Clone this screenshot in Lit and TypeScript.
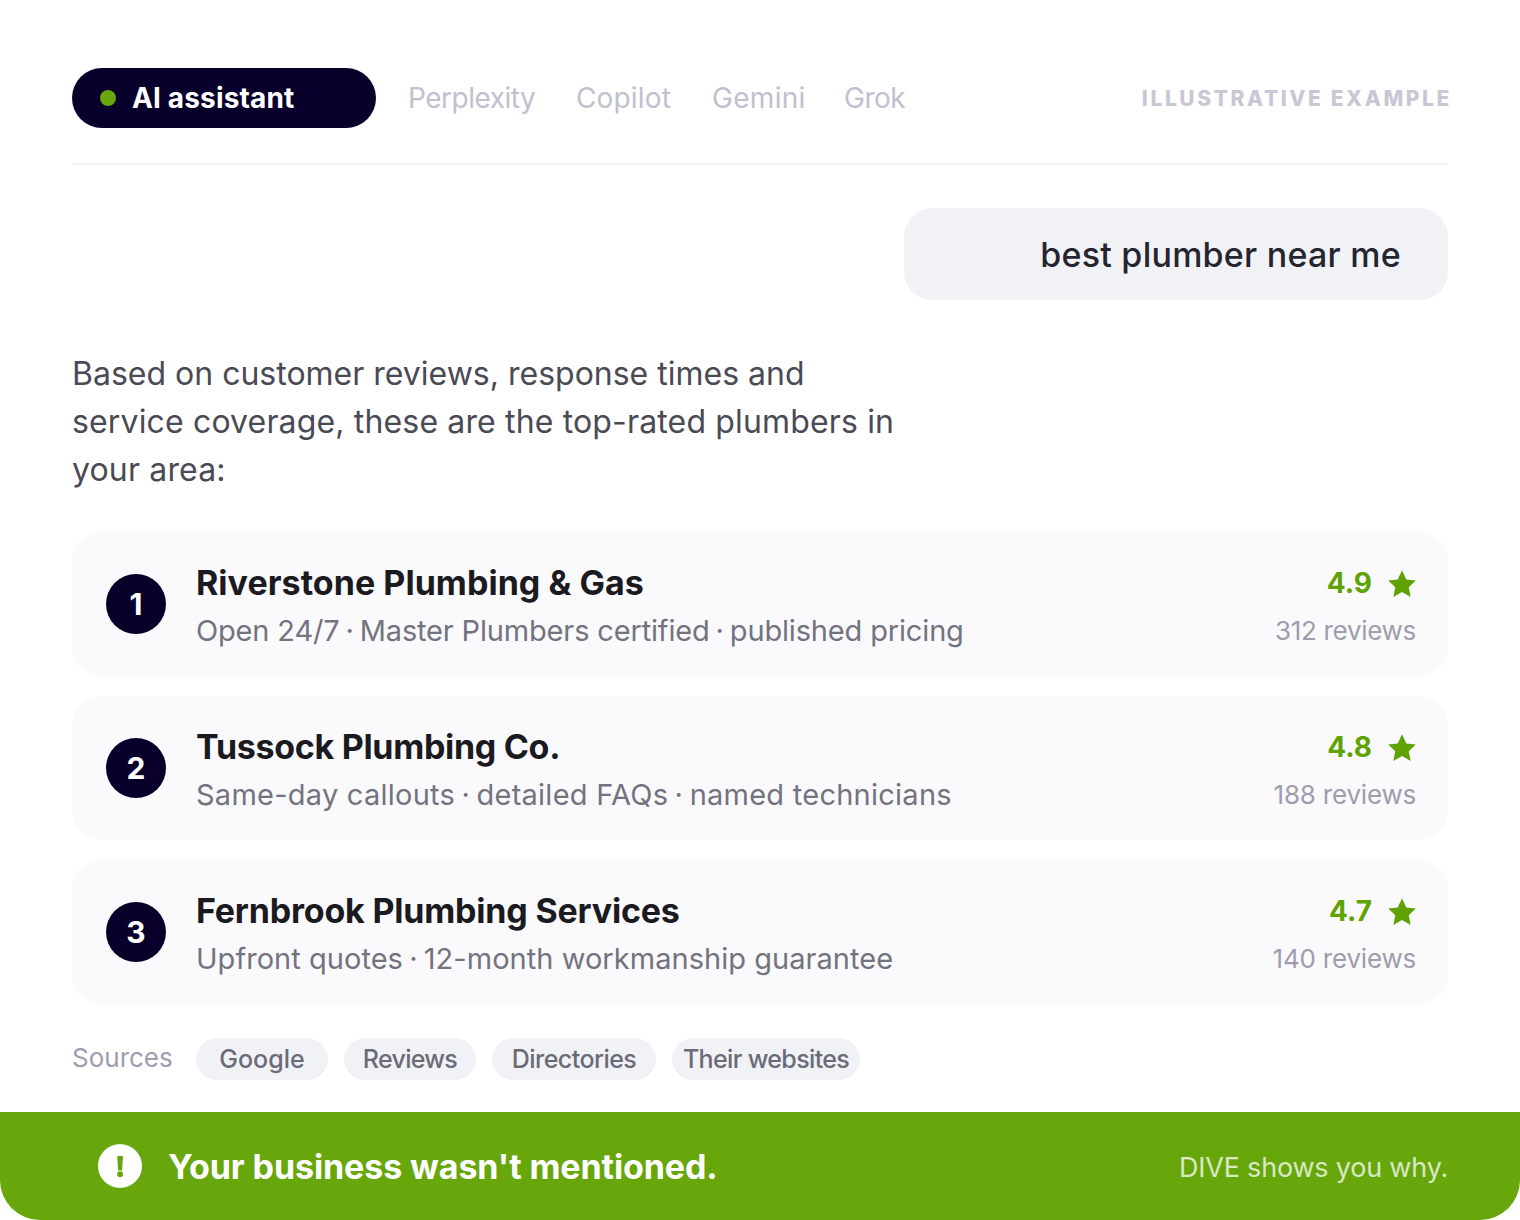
import { LitElement, html, css } from "lit";
import { customElement } from "lit/decorators.js";

const results = [
  { n: 1, name: "Riverstone Plumbing & Gas", nameLs: 0.04, sub: ["Open 24/7", "Master Plumbers certified", "published pricing"], subLs: -0.16, rate: "4.9", rev: "312 reviews", revLs: -0.3 },
  { n: 2, name: "Tussock Plumbing Co.", nameLs: -0.3, sub: ["Same-day callouts", "detailed FAQs", "named technicians"], subLs: 0.25, rate: "4.8", rev: "188 reviews", revLs: -0.2 },
  { n: 3, name: "Fernbrook Plumbing Services", nameLs: -0.2, sub: ["Upfront quotes", "12-month workmanship guarantee"], subLs: 0.04, rate: "4.7", rev: "140 reviews", revLs: -0.2 },
];
const chips = [
  { t: "Google", w: 132, ls: 0 },
  { t: "Reviews", w: 132, ls: -0.7 },
  { t: "Directories", w: 164, ls: -0.55 },
  { t: "Their websites", w: 188, ls: -0.65 },
];

@customElement("app-root")
export class AppRoot extends LitElement {
  static styles = css`
    :host { display: block; width: 1520px; height: 1220px; background: #fff; font-family: "Inter", "Noto Sans", sans-serif; overflow: hidden; }
    .page { display: flex; flex-direction: column; height: 1220px; box-sizing: border-box; padding-top: 68px; }
    .main { padding: 0 72px; flex: 1; display: flex; flex-direction: column; }
    .tabs { display: flex; align-items: center; height: 97px; box-sizing: border-box; padding-bottom: 35px; border-bottom: 2px solid #f0f0f5; }
    .active { width: 304px; height: 60px; box-sizing: border-box; border-radius: 30px; background: #08002b; color: #fff; display: flex; align-items: center; padding-left: 28px; gap: 16px; font-size: 28px; font-weight: 700; letter-spacing: 0.15px; }
    .dot { width: 16px; height: 16px; border-radius: 50%; background: #67a70c; }
    .tab { font-size: 28px; color: #c0c0cf; }
    .tab1 { margin-left: 32px; width: 168px; letter-spacing: -0.5px; }
    .tab2 { width: 136px; letter-spacing: 0.15px; }
    .tab3 { width: 132px; letter-spacing: 0.3px; }
    .tab4 { letter-spacing: -0.5px; }
    .tag { margin-left: auto; margin-right: -4px; font-size: 21px; font-weight: 800; letter-spacing: 2.6px; color: #c8c8d4; }
    .bubble { align-self: flex-end; width: 544px; height: 92px; box-sizing: border-box; margin-top: 43px; border-radius: 28px; background: #f1f2f6; display: flex; align-items: center; justify-content: flex-end; padding-right: 47px; font-size: 34px; font-weight: 500; letter-spacing: 0.25px; color: #25252f; }
    .intro { margin: 50px 0 0; height: 144px; width: 880px; font-size: 32px; line-height: 48px; color: #4a4a55; }
    .intro span { display: block; white-space: nowrap; }
    .intro .l2 { letter-spacing: 0.15px; }
    .intro .l3 { letter-spacing: 0.15px; }
    .list { display: flex; flex-direction: column; gap: 20px; margin-top: 38px; }
    .card { height: 144px; box-sizing: border-box; border-radius: 28px; background: #fafafc; display: flex; align-items: center; padding: 0 32px 0 34px; gap: 30px; }
    .num { width: 60px; height: 60px; border-radius: 50%; background: #08002b; color: #fff; display: flex; align-items: center; justify-content: center; font-size: 30px; font-weight: 700; flex: none; }
    .body { flex: 1; display: flex; flex-direction: column; gap: 8px; padding-top: 6px; }
    .name { font-size: 34px; line-height: 40px; font-weight: 700; color: #1a1a1f; }
    .sub { font-size: 29px; line-height: 40px; color: #73737f; }
    .sep { margin: 0 -2px; }
    .side { display: flex; flex-direction: column; align-items: flex-end; gap: 8px; padding-top: 6px; }
    .rate { display: flex; align-items: center; gap: 15px; height: 40px; font-size: 28px; font-weight: 700; color: #5fa203; margin-right: -1px; }
    .rate svg { width: 30px; height: 30px; display: block; margin-top: 2px; }
    .rev { font-size: 26px; line-height: 40px; color: #9d9dae; }
    .sources { display: flex; align-items: center; margin-top: 34px; gap: 16px; }
    .sources .lab { width: 108px; font-size: 26px; color: #9d9dae; padding-bottom: 4px; }
    .chip { height: 42px; border-radius: 21px; background: #f1f2f6; display: flex; align-items: center; justify-content: center; font-size: 25px; font-weight: 500; color: #6b6b78; }
    .foot { height: 108px; flex: none; background: #67a70c; border-radius: 0 0 40px 40px; display: flex; align-items: center; padding: 0 72px 0 98px; color: #fff; }
    .warn { width: 44px; height: 44px; display: block; margin-right: 26px; flex: none; }
    .msg { font-size: 34px; font-weight: 700; letter-spacing: -0.1px; }
    .why { margin-left: auto; font-size: 27px; letter-spacing: -0.2px; padding-top: 3px; color: rgba(255,255,255,.75); }
  `;
  render() {
    return html`<div class="page">
      <div class="main">
        <div class="tabs">
          <div class="active"><span class="dot"></span>AI assistant</div>
          <div class="tab tab1">Perplexity</div><div class="tab tab2">Copilot</div><div class="tab tab3">Gemini</div><div class="tab tab4">Grok</div>
          <div class="tag">ILLUSTRATIVE EXAMPLE</div>
        </div>
        <div class="bubble">best plumber near me</div>
        <p class="intro"><span>Based on customer reviews, response times and</span><span class="l2">service coverage, these are the top-rated plumbers in</span><span class="l3">your area:</span></p>
        <div class="list">
          ${results.map((r) => html`<div class="card">
            <div class="num">${r.n}</div>
            <div class="body"><div class="name" style="letter-spacing:${r.nameLs}px">${r.name}</div><div class="sub" style="letter-spacing:${r.subLs}px">${r.sub.map((s, i) => html`${i > 0 ? html`<span class="sep"> · </span>` : ""}${s}`)}</div></div>
            <div class="side">
              <div class="rate">${r.rate}<svg viewBox="0 0 24 24"><path fill="#5fa203" d="M12 1l3.4 7.3 7.6.9-5.6 5.3 1.5 7.8L12 18.4l-6.9 3.9 1.5-7.8L1 9.2l7.6-.9z"/></svg></div>
              <div class="rev" style="letter-spacing:${r.revLs}px">${r.rev}</div>
            </div>
          </div>`)}
        </div>
        <div class="sources">
          <div class="lab">Sources</div>
          ${chips.map((c) => html`<div class="chip" style="width:${c.w}px;letter-spacing:${c.ls}px">${c.t}</div>`)}
        </div>
      </div>
      <div class="foot">
        <svg class="warn" viewBox="0 0 44 44"><circle cx="22" cy="22" r="22" fill="#fff"/><path fill="#67a70c" d="M19.2 12h5.8l-.9 14.4h-4z"/><circle cx="22.1" cy="30.2" r="2.9" fill="#67a70c"/></svg>
        <div class="msg">Your business wasn't mentioned.</div>
        <div class="why">DIVE shows you why.</div>
      </div>
    </div>`;
  }
}
